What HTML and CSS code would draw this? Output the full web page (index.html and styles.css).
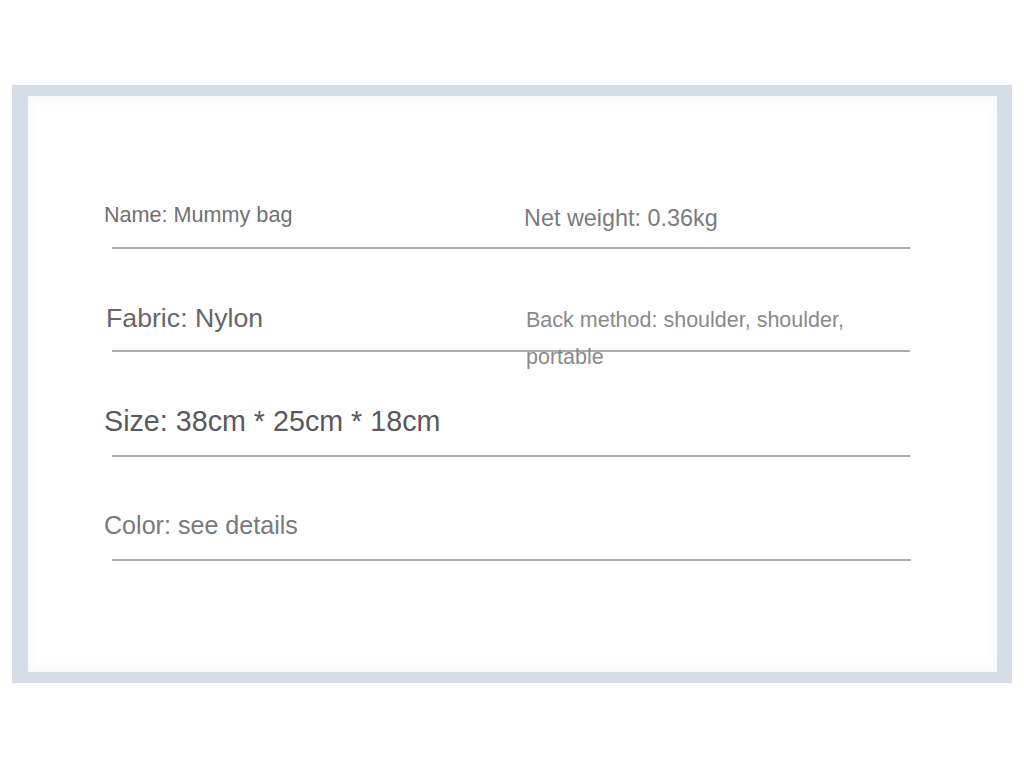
FILE: index.html
```html
<!DOCTYPE html>
<html lang="en">
<head>
<meta charset="utf-8">
<title>Mummy bag specs</title>
<link rel="stylesheet" href="styles.css">
</head>
<body>
<div class="frame">
  <div class="sheet">
    <div class="row row1">
      <div class="cell name">Name: Mummy bag</div>
      <div class="cell weight">Net weight: 0.36kg</div>
    </div>
    <div class="rule r1"></div>
    <div class="row row2">
      <div class="cell fabric">Fabric: Nylon</div>
      <div class="cell back">Back method: shoulder, shoulder,<br>portable</div>
    </div>
    <div class="rule r2"></div>
    <div class="row row3">
      <div class="cell size">Size: 38cm * 25cm * 18cm</div>
    </div>
    <div class="rule r3"></div>
    <div class="row row4">
      <div class="cell color">Color: see details</div>
    </div>
    <div class="rule r4"></div>
  </div>
</div>
</body>
</html>
```

FILE: styles.css
```css
html, body {
  margin: 0;
  padding: 0;
  background: #ffffff;
}

body {
  font-family: "Liberation Sans", Arial, sans-serif;
  padding-top: 85px;
  height: 683px;
}

.frame {
  margin-left: 12px;
  width: 1000px;
  height: 598px;
  box-sizing: border-box;
  border-style: solid;
  border-color: #d6dde7;
  border-width: 11px 15px 11px 16px;
  background: #ffffff;
}

.sheet {
  height: 100%;
  box-sizing: border-box;
  padding-top: 104px;
  box-shadow: inset 0 0 14px rgba(225, 232, 240, 0.4);
}

.row {
  display: grid;
  grid-template-columns: 420px 1fr;
  align-items: start;
  padding-left: 76px;
}

.cell {
  white-space: nowrap;
}

.rule {
  margin-left: 84px;
  width: 798px;
  height: 2px;
  background: #acacac;
}

.row1 { height: 30px; }
.name {
  font-size: 21.6px;
  line-height: 30px;
  color: #717171;
}
.weight {
  font-size: 23.4px;
  line-height: 30px;
  margin-top: 3px;
  color: #7c7c7c;
}
.r1 { margin-top: 17px; }

.row2 { height: 34px; margin-top: 51px; }
.fabric {
  font-size: 26.7px;
  line-height: 34px;
  margin-top: 1px;
  margin-left: 2px;
  color: #676767;
}
.back {
  font-size: 21.5px;
  line-height: 37px;
  margin-top: 2px;
  margin-left: 2px;
  color: #8a8a8a;
}
.r2 { margin-top: 16px; }

.row3 { height: 36px; margin-top: 51px; }
.size {
  font-size: 28.7px;
  line-height: 36px;
  color: #5a5a5a;
}
.r3 { margin-top: 16px; }

.row4 { height: 32px; margin-top: 52px; }
.color {
  font-size: 25.1px;
  line-height: 32px;
  color: #7a7a7a;
}
.r4 { margin-top: 18px; width: 799px; }
```
